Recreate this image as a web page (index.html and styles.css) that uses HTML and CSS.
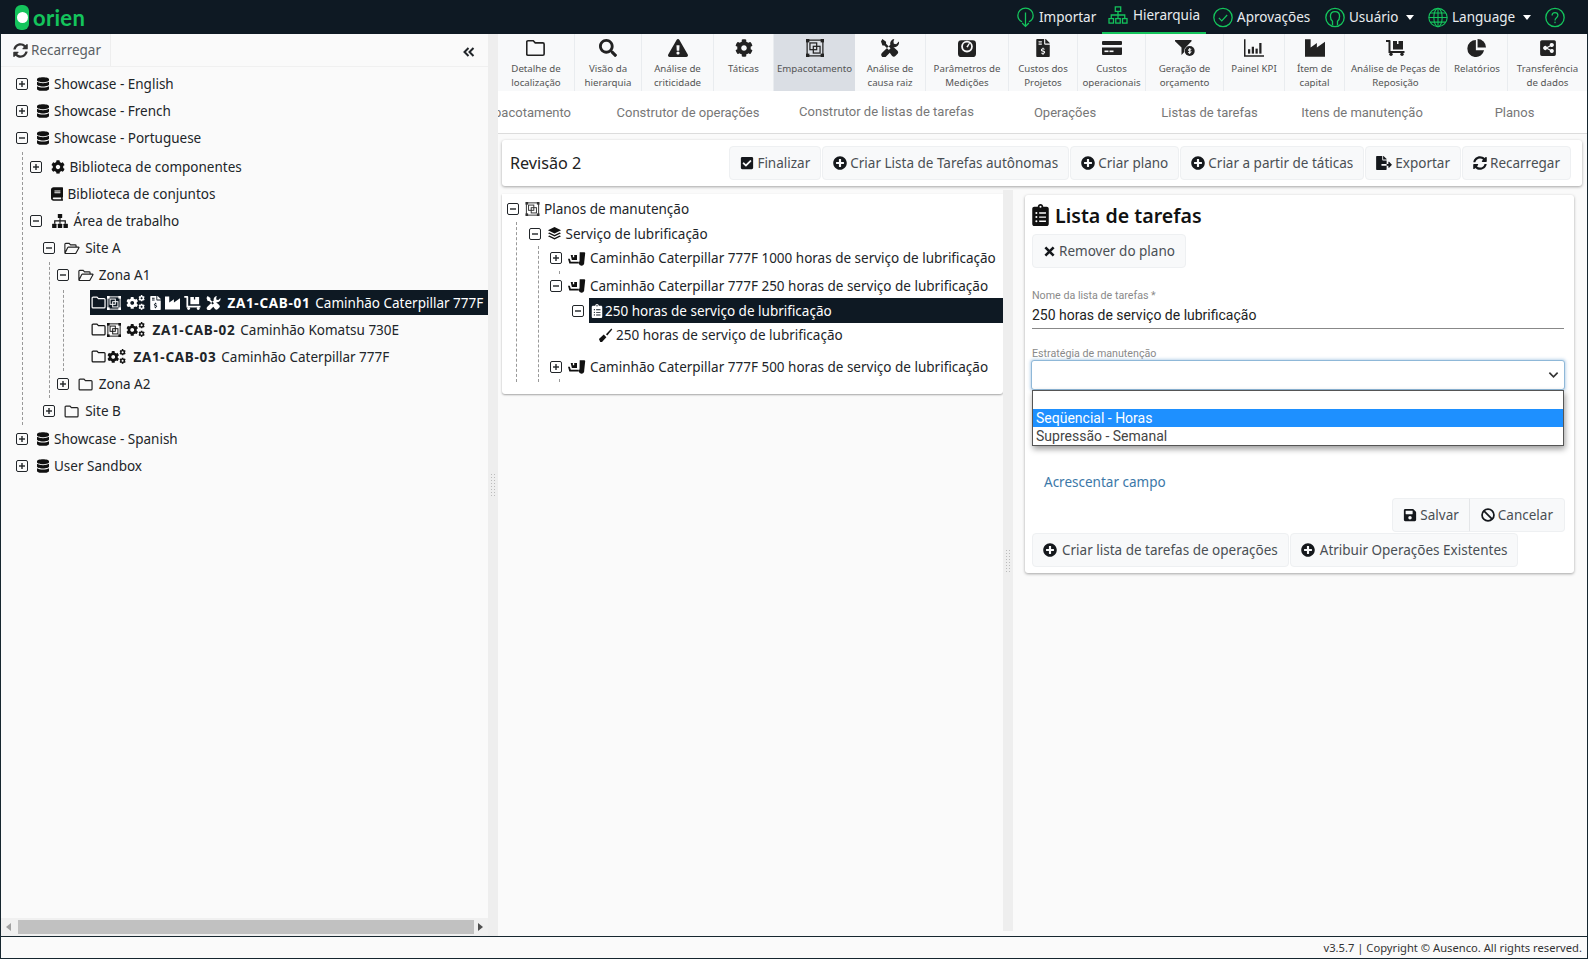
FILE: index.html
```html
<!DOCTYPE html>
<html lang="pt">
<head>
  <meta charset="UTF-8" />
  <meta name="viewport" content="width=device-width, initial-scale=1.0"/>
  <title>Orien</title>
  <link rel="stylesheet" href="styles.css">
</head>
<body>

<svg class="sprite" xmlns="http://www.w3.org/2000/svg">
  <symbol id="database" viewBox="0 0 448 512"><path d="M448 73.143v45.714C448 159.143 347.667 192 224 192S0 159.143 0 118.857V73.143C0 32.857 100.333 0 224 0s224 32.857 224 73.143zM448 176v102.857C448 319.143 347.667 352 224 352S0 319.143 0 278.857V176c48.125 33.143 136.208 48.572 224 48.572S399.874 209.143 448 176zm0 160v102.857C448 479.143 347.667 512 224 512S0 479.143 0 438.857V336c48.125 33.143 136.208 48.572 224 48.572S399.874 369.143 448 336z"/></symbol>
  <symbol id="cog" viewBox="0 0 512 512"><path d="M487.4 315.7l-42.6-24.6c4.3-23.2 4.3-47 0-70.2l42.6-24.6c4.9-2.8 7.1-8.6 5.5-14-11.1-35.6-30-67.8-54.7-94.6-3.8-4.1-10-5.1-14.8-2.3L380.8 110c-17.9-15.4-38.5-27.3-60.8-35.1V25.8c0-5.6-3.9-10.5-9.4-11.7-36.7-8.2-74.3-7.8-109.2 0-5.5 1.2-9.4 6.1-9.4 11.7V75c-22.2 7.9-42.8 19.8-60.8 35.1L88.7 85.5c-4.9-2.8-11-1.9-14.8 2.3-24.7 26.7-43.6 58.9-54.7 94.6-1.7 5.4.6 11.2 5.5 14L67.3 221c-4.3 23.2-4.3 47 0 70.2l-42.6 24.6c-4.9 2.8-7.1 8.6-5.5 14 11.1 35.6 30 67.8 54.7 94.6 3.8 4.1 10 5.1 14.8 2.3l42.6-24.6c17.9 15.4 38.5 27.3 60.8 35.1v49.2c0 5.6 3.9 10.5 9.4 11.7 36.7 8.2 74.3 7.8 109.2 0 5.5-1.2 9.4-6.1 9.4-11.7v-49.2c22.2-7.9 42.8-19.8 60.8-35.1l42.6 24.6c4.9 2.8 11 1.9 14.8-2.3 24.7-26.7 43.6-58.9 54.7-94.6 1.5-5.5-.7-11.3-5.6-14.1zM256 336c-44.1 0-80-35.9-80-80s35.9-80 80-80 80 35.9 80 80-35.9 80-80 80z"/></symbol>
  <symbol id="search" viewBox="0 0 512 512"><path d="M505 442.7L405.3 343c-4.5-4.5-10.6-7-17-7H372c27.6-35.3 44-79.7 44-128C416 93.1 322.9 0 208 0S0 93.1 0 208s93.1 208 208 208c48.3 0 92.7-16.4 128-44v16.3c0 6.4 2.5 12.5 7 17l99.7 99.7c9.4 9.4 24.6 9.4 33.9 0l28.3-28.3c9.4-9.4 9.4-24.6.1-34zM208 336c-70.7 0-128-57.2-128-128 0-70.7 57.2-128 128-128 70.7 0 128 57.2 128 128 0 70.7-57.2 128-128 128z"/></symbol>
  <symbol id="warn" viewBox="0 0 576 512"><path fill-rule="evenodd" d="M569.5 440C588 472 564.8 512 527.9 512H48.1C11.1 512-11.9 472 6.5 440L246.4 24c18.5-32 64.7-32 83.2 0zM288 354c-25.4 0-46 20.6-46 46s20.6 46 46 46 46-20.6 46-46-20.6-46-46-46zm-43.7-165.3l7.4 136c.3 6.4 5.6 11.3 12 11.3h48.5c6.4 0 11.6-5 12-11.3l7.4-136c.4-6.9-5.1-12.7-12-12.7h-63.4c-6.9 0-12.3 5.8-12 12.7z"/></symbol>
  <symbol id="plus" viewBox="0 0 512 512"><path d="M256 8C119 8 8 119 8 256s111 248 248 248 248-111 248-248S393 8 256 8zm144 276c0 6.6-5.4 12-12 12h-92v92c0 6.6-5.4 12-12 12h-56c-6.6 0-12-5.4-12-12v-92h-92c-6.6 0-12-5.4-12-12v-56c0-6.6 5.4-12 12-12h92v-92c0-6.6 5.4-12 12-12h56c6.6 0 12 5.4 12 12v92h92c6.6 0 12 5.4 12 12v56z"/></symbol>
  <symbol id="check" viewBox="0 0 448 512"><path d="M400 480H48c-26.51 0-48-21.49-48-48V80c0-26.51 21.49-48 48-48h352c26.51 0 48 21.49 48 48v352c0 26.51-21.49 48-48 48zm-204.686-98.059l184-184c6.248-6.248 6.248-16.379 0-22.627l-22.627-22.627c-6.248-6.248-16.379-6.249-22.628 0L184 302.745l-69.059-69.059c-6.248-6.248-16.379-6.248-22.628 0L69.686 256.313c-6.248 6.248-6.248 16.379 0 22.627l104 104c6.249 6.25 16.379 6.25 22.628.001z"/></symbol>
  <symbol id="sync" viewBox="0 0 512 512"><path d="M370.72 133.28C339.458 104.008 298.888 87.962 255.848 88c-77.458.068-144.328 53.178-162.791 126.85-1.344 5.363-6.122 9.15-11.651 9.15H24.103c-7.498 0-13.194-6.807-11.807-14.176C33.933 94.924 134.813 8 256 8c66.448 0 126.791 26.136 171.315 68.685L463.03 40.97C478.149 25.851 504 36.559 504 57.941V192c0 13.255-10.745 24-24 24H345.941c-21.382 0-32.09-25.851-16.971-40.971l41.75-41.749zM32 296h134.059c21.382 0 32.09 25.851 16.971 40.971l-41.75 41.75c31.262 29.273 71.835 45.319 114.876 45.28 77.418-.07 144.315-53.144 162.787-126.849 1.344-5.363 6.122-9.15 11.651-9.15h57.304c7.498 0 13.194 6.807 11.807 14.176C478.067 417.076 377.187 504 256 504c-66.448 0-126.791-26.136-171.315-68.685L48.97 471.03C33.851 486.149 8 475.441 8 454.059V320c0-13.255 10.745-24 24-24z"/></symbol>
  <symbol id="folder" viewBox="0 0 16 14"><path fill="none" stroke="currentColor" stroke-width="1.3" d="M1.6 1.2h4.2l1.6 1.7h6.1c.6 0 1 .4 1 1v7.9c0 .6-.4 1-1 1H1.6c-.6 0-1-.4-1-1V2.2c0-.6.4-1 1-1z"/></symbol>
  <symbol id="folder-open" viewBox="0 0 18 14"><path fill="none" stroke="currentColor" stroke-width="1.3" d="M1 12V2.2c0-.6.4-1 1-1h3.8l1.6 1.7h5.2c.6 0 1 .4 1 1v1.4M1.3 12.6h11.9l3.6-6.4c.2-.4 0-.8-.5-.8H5.1c-.4 0-.7.2-.9.5L1.2 12z"/></symbol>
  <symbol id="package" viewBox="0 0 16 16"><g fill="none" stroke="currentColor" stroke-width="1.1"><rect x="1" y="1" width="14" height="14"/><rect x="3.5" y="3.5" width="6" height="6"/><rect x="6.5" y="6.5" width="6" height="6"/></g><g><rect width="3" height="3"/><rect x="13" width="3" height="3"/><rect y="13" width="3" height="3"/><rect x="13" y="13" width="3" height="3"/></g></symbol>
  <symbol id="book" viewBox="0 0 448 512"><path d="M448 360V24c0-13.3-10.7-24-24-24H96C43 0 0 43 0 96v320c0 53 43 96 96 96h328c13.3 0 24-10.7 24-24v-16c0-7.5-3.5-14.3-8.9-18.7-4.2-15.4-4.2-59.3 0-74.7 5.4-4.3 8.9-11.1 8.9-18.6zM128 134c0-3.3 2.7-6 6-6h212c3.3 0 6 2.7 6 6v20c0 3.3-2.7 6-6 6H134c-3.3 0-6-2.7-6-6v-20zm0 64c0-3.3 2.7-6 6-6h212c3.3 0 6 2.7 6 6v20c0 3.3-2.7 6-6 6H134c-3.3 0-6-2.7-6-6v-20zm253.4 250H96c-17.7 0-32-14.3-32-32 0-17.6 14.4-32 32-32h285.4c-1.9 17.1-1.9 46.9 0 64z"/></symbol>
  <symbol id="sitemap" viewBox="0 0 18 16"><rect x="6.5" y="0" width="5" height="4.5" rx=".6"/><rect x="0" y="11" width="5" height="5" rx=".6"/><rect x="6.5" y="11" width="5" height="5" rx=".6"/><rect x="13" y="11" width="5" height="5" rx=".6"/><path d="M8.4 4.5h1.2v2.7h6.1V11h-1.4V8.5H9.6V11H8.4V8.5H3.7V11H2.3V7.2h6.1z"/></symbol>
  <symbol id="gears" viewBox="0 0 20 16"><use href="#cog" x="0" y="2" width="13" height="13"/><use href="#cog" x="13" y="0" width="7" height="7"/><use href="#cog" x="13" y="9" width="7" height="7"/></symbol>
  <symbol id="invoice" viewBox="0 0 384 512"><path d="M377 105L279.1 7c-4.5-4.5-10.6-7-17-7H256v128h128v-6.1c0-6.3-2.5-12.4-7-16.9zM224 136V0H24C10.7 0 0 10.7 0 24v464c0 13.3 10.7 24 24 24h336c13.3 0 24-10.7 24-24V160H248c-13.2 0-24-10.800-24-24zM64 72c0-4.400 3.600-8 8-8h80c4.400 0 8 3.600 8 8v16c0 4.400-3.600 8-8 8H72c-4.400 0-8-3.600-8-8V72zm0 64c0-4.400 3.600-8 8-8h80c4.400 0 8 3.600 8 8v16c0 4.400-3.600 8-8 8H72c-4.400 0-8-3.600-8-8v-16z"/><path class="cut" d="M208 270v-24h-32v24c-26 3-44 22-44 44 0 22 15 38 37 44l40 11c7 2 11 6 11 10 0 7-7 11-15 11h-28c-7 0-13-2-18-5l-22 21c11 10 25 15 39 16v24h32v-24c26-3 44-22 44-44 0-22-15-38-37-44l-40-11c-7-2-11-6-11-10 0-7 7-11 15-11h28c7 0 13 2 18 5l22-21c-11-10-25-15-39-16z"/></symbol>
  <symbol id="industry" viewBox="0 0 16 14"><path d="M0 0h4.500v6.500L9.500 3v3.500L16 2v12H0z"/></symbol>
  <symbol id="dolly" viewBox="0 0 20 16"><path d="M0 0h3.500a1 1 0 0 1 1 1v10h14v2H2.500V2H0z"/><path d="M7 1h4v3h1.500V1H17v8.500H7z"/><circle cx="5" cy="14.300" r="1.700"/><circle cx="16" cy="14.300" r="1.700"/></symbol>
  <symbol id="tools" viewBox="0 0 16 16"><path d="M1.200 0l3.300 2.400v1.800l4 4-1.500 1.500-4-4H1.300L0 2.200zM11.800.1a4 4 0 0 0-3.500 5L1 12.300a2.400 2.400 0 0 0 0 3.400 2.400 2.400 0 0 0 3.300 0l3.500-3.500 1.900 2.600a2.300 2.300 0 0 0 3.300.1l1.500-1.500a2.300 2.300 0 0 0 0-3.200L11 7.100a4 4 0 0 0 4.900-4.900l-2.400 2.400-2.100-.3-.3-2.100z"/></symbol>
  <symbol id="weight" viewBox="0 0 16 16"><path fill-rule="evenodd" d="M3 1h10a3 3 0 0 1 3 3v9a3 3 0 0 1-3 3H3a3 3 0 0 1-3-3V4a3 3 0 0 1 3-3zm5 0.500a5.200 5.200 0 1 0 0 10.400 5.200 5.200 0 0 0 0-10.400z"/><circle cx="8" cy="6.700" r="3.600"/><path fill="#f8f9fa" d="M9.900 3.300l.8.400-2 3.800-1.300-.7z"/></symbol>
  <symbol id="card" viewBox="0 0 20 16"><rect y="1" width="20" height="4" rx="1"/><path d="M0 7.500h20V14a1 1 0 0 1-1 1H1a1 1 0 0 1-1-1z"/><rect x="2.500" y="10.500" width="4" height="1.600" fill="#f8f9fa"/><rect x="7.500" y="10.500" width="4" height="1.600" fill="#f8f9fa"/></symbol>
  <symbol id="funnel" viewBox="0 0 20 16"><path d="M.5 0h15.500c.6 0 .9.700.5 1.200L11.500 6.500a5.500 5.500 0 0 0-2.200 5.500L6.500 15V7.500L0 1.200C-.300.700 0 0 .5 0z"/><circle cx="14.700" cy="11" r="5"/><path fill="none" stroke="#f8f9fa" stroke-width="1" d="M16.300 9.300h-2.200c-1 0-1 1.600 0 1.600h1.200c1 0 1 1.700 0 1.700h-2.200M14.700 8v6"/></symbol>
  <symbol id="bars" viewBox="0 0 16 14"><path d="M0 0h1.200v12.800H16V14H0z"/><rect x="3.200" y="8" width="1.800" height="3.500"/><rect x="6.200" y="6" width="1.800" height="5.500"/><rect x="9.200" y="7.500" width="1.800" height="4"/><rect x="12.200" y="3" width="1.800" height="8.500"/></symbol>
  <symbol id="pie" viewBox="0 0 16 16"><path d="M7 1a7.500 7.500 0 1 0 7.300 9H7z"/><path d="M8.500 0A7.500 7.500 0 0 1 16 7.500H8.500z"/></symbol>
  <symbol id="share" viewBox="0 0 14 16"><path fill-rule="evenodd" d="M1.500 1h11A1.500 1.500 0 0 1 14 2.500v11a1.500 1.500 0 0 1-1.500 1.500h-11A1.500 1.500 0 0 1 0 13.500v-11A1.500 1.500 0 0 1 1.500 1zm8.800 2.600a1.800 1.800 0 0 0-1.700 2.200L6 7.100a1.800 1.800 0 1 0 0 1.800l2.600 1.300a1.800 1.800 0 1 0 .5-.9L6.500 8v-.1l2.600-1.300a1.800 1.800 0 1 0 1.200-3z"/></symbol>
  <symbol id="loading" viewBox="0 0 20 16"><path d="M3 4h2.400v2.600h1.500V4H10v5.800H4.300z"/><path d="M0 8.200h2l1.100 3.300H12v2H1.500z"/><path d="M13 1h5c.8 0 1.200.5 1.100 1.200L18 12.500a3 3 0 1 1-5.200-1.500z"/></symbol>
  <symbol id="clipboard" viewBox="0 0 384 512"><path fill-rule="evenodd" d="M336 64h-80c0-35.300-28.700-64-64-64s-64 28.700-64 64H48C21.500 64 0 85.500 0 112v352c0 26.500 21.500 48 48 48h288c26.500 0 48-21.500 48-48V112c0-26.500-21.500-48-48-48zM96 424a24 24 0 1 1 0-48 24 24 0 0 1 0 48zm0-96a24 24 0 1 1 0-48 24 24 0 0 1 0 48zm0-96a24 24 0 1 1 0-48 24 24 0 0 1 0 48zm96-192a24 24 0 1 1 0 48 24 24 0 0 1 0-48zm128 368c0 4.400-3.600 8-8 8H168c-4.400 0-8-3.600-8-8v-16c0-4.400 3.600-8 8-8h144c4.400 0 8 3.600 8 8zm0-96c0 4.400-3.600 8-8 8H168c-4.400 0-8-3.600-8-8v-16c0-4.400 3.600-8 8-8h144c4.400 0 8 3.600 8 8zm0-96c0 4.400-3.600 8-8 8H168c-4.400 0-8-3.600-8-8v-16c0-4.400 3.600-8 8-8h144c4.400 0 8 3.600 8 8z"/></symbol>
  <symbol id="export" viewBox="0 0 576 512"><path d="M384 121.900c0-6.300-2.500-12.400-7-16.900L279.100 7c-4.500-4.500-10.600-7-17-7H256v128h128zM571 308l-95.700-96.400c-10.100-10.100-27.400-3-27.400 11.300V288h-64v64h64v65.200c0 14.300 17.300 21.400 27.400 11.300L571 332c6.600-6.600 6.600-17.400 0-24zm-379 28v-32c0-8.800 7.200-16 16-16h176V160H248c-13.200 0-24-10.800-24-24V0H24C10.700 0 0 10.700 0 24v464c0 13.300 10.700 24 24 24h336c13.300 0 24-10.700 24-24V352H208c-8.800 0-16-7.200-16-16z"/></symbol>
  <symbol id="save" viewBox="0 0 448 512"><path fill-rule="evenodd" d="M433.900 129.900l-83.900-83.900A48 48 0 0 0 316.100 32H48C21.500 32 0 53.500 0 80v352c0 26.500 21.500 48 48 48h352c26.500 0 48-21.500 48-48V163.900c0-12.700-5.100-24.900-14.100-34zM224 416a64 64 0 1 1 0-128 64 64 0 0 1 0 128zm96-304.500V212c0 6.600-5.400 12-12 12H76c-6.600 0-12-5.400-12-12V108c0-6.600 5.400-12 12-12h228.500c3.200 0 6.200 1.300 8.500 3.500l3.500 3.500c2.200 2.300 3.500 5.300 3.500 8.500z"/></symbol>
  <symbol id="ban" viewBox="0 0 16 16"><circle cx="8" cy="8" r="6.800" fill="none" stroke="currentColor" stroke-width="2"/><path d="M3.300 3.300l9.400 9.400" stroke="currentColor" stroke-width="2"/></symbol>
  <symbol id="times" viewBox="0 0 12 12"><path d="M1.500 1.500l9 9M10.500 1.500l-9 9" stroke="currentColor" stroke-width="2.800"/></symbol>
  <symbol id="chevrons" viewBox="0 0 12 10"><path d="M5.500 1L1.500 5l4 4M10.500 1l-4 4 4 4" fill="none" stroke="currentColor" stroke-width="2"/></symbol>
  <symbol id="wrench" viewBox="0 0 16 16"><path d="M.5 12.500L6 7.500l3 3-5 5.500H2z"/><path d="M8.500 7l6.200-6.300 1 1L10 8.500z"/></symbol>
  <symbol id="layers" viewBox="0 0 16 16"><path d="M8 0l7.500 3.700L8 7.400.5 3.700z"/><path d="M2.200 6.200L8 9l5.800-2.800 1.700.9L8 10.800.5 7.100z"/><path d="M2.200 9.700L8 12.500l5.800-2.800 1.700.9L8 14.300.5 10.600z"/></symbol>
  <symbol id="n-import" viewBox="0 0 20 24"><path fill="none" stroke="currentColor" stroke-width="1.500" d="M6 17C3 15.500 1 12.500 1 9.500 1 4.800 5 1 10 1s9 3.800 9 8.500c0 3-2 6-5 7.500M10 6v16M6 18.500l4 4 4-4"/></symbol>
  <symbol id="n-tree" viewBox="0 0 22 20"><g fill="none" stroke="currentColor" stroke-width="1.400"><rect x="8" y="1" width="6" height="5"/><rect x="1" y="14" width="5" height="5"/><rect x="8.500" y="14" width="5" height="5"/><rect x="16" y="14" width="5" height="5"/><path d="M11 6v8M3.500 14v-4h15v4"/></g></symbol>
  <symbol id="n-ok" viewBox="0 0 24 24"><circle cx="12" cy="12" r="11" fill="none" stroke="currentColor" stroke-width="1.600"/><path d="M7 12.500l3.500 3.500L17 9" fill="none" stroke="currentColor" stroke-width="1.500"/></symbol>
  <symbol id="n-user" viewBox="0 0 24 24"><circle cx="12" cy="12" r="11" fill="none" stroke="currentColor" stroke-width="1.600"/><path d="M9 21v-4.500C7 15 6.500 12.500 6.500 10.500 6.500 7 9 5 12 5s5.500 2 5.500 5.500c0 2-.5 4.500-2.500 6V21" fill="none" stroke="currentColor" stroke-width="1.600"/></symbol>
  <symbol id="n-globe" viewBox="0 0 24 24"><g fill="none" stroke="currentColor" stroke-width="1.300"><circle cx="12" cy="12" r="11"/><ellipse cx="12" cy="12" rx="5" ry="11"/><path d="M12 1v22M1 12h22M2.500 6.500h19M2.500 17.500h19"/></g></symbol>
  <symbol id="n-help" viewBox="0 0 24 24"><circle cx="12" cy="12" r="11" fill="none" stroke="currentColor" stroke-width="1.600"/><path d="M8.500 9.500c0-2.200 1.600-3.500 3.500-3.500s3.500 1.300 3.500 3.300c0 3-3.500 3-3.500 6.200" fill="none" stroke="currentColor" stroke-width="1.500"/><rect x="11.200" y="17" width="1.600" height="1.800"/></symbol>
</svg>

<div class="app">

  <header class="topbar">
    <div class="logo"><span class="logo-pill"></span><span class="logo-text">orien</span></div>
    <nav class="nav">
      <a class="nav-item n1"><svg class="n-ico"><use href="#n-import"/></svg>Importar</a>
      <a class="nav-item n2 active"><svg class="n-ico wide"><use href="#n-tree"/></svg>Hierarquia</a>
      <a class="nav-item n3"><svg class="n-ico"><use href="#n-ok"/></svg>Aprovações</a>
      <a class="nav-item n4"><svg class="n-ico"><use href="#n-user"/></svg>Usuário<span class="caret"></span></a>
      <a class="nav-item n5"><svg class="n-ico"><use href="#n-globe"/></svg>Language<span class="caret"></span></a>
      <a class="nav-item n6"><svg class="n-ico"><use href="#n-help"/></svg></a>
    </nav>
  </header>

  <div class="main">

    <aside class="side">
      <div class="side-head">
        <button class="reload"><svg class="i"><use href="#sync"/></svg>Recarregar</button>
        <svg class="collapse"><use href="#chevrons"/></svg>
      </div>
      <div class="side-tree">
        <ul class="tree">
          <li><div class="row"><span class="tg plus"></span><svg class="i db"><use href="#database"/></svg><span>Showcase - English</span></div></li>
          <li><div class="row"><span class="tg plus"></span><svg class="i db"><use href="#database"/></svg><span>Showcase - French</span></div></li>
          <li><div class="row"><span class="tg"></span><svg class="i db"><use href="#database"/></svg><span>Showcase - Portuguese</span></div>
            <ul class="lined top">
              <li><div class="row"><span class="tg plus"></span><svg class="i c14"><use href="#cog"/></svg><span>Biblioteca de componentes</span></div></li>
              <li><div class="row"><span class="tg none"></span><svg class="i c12"><use href="#book"/></svg><span>Biblioteca de conjuntos</span></div></li>
              <li><div class="row"><span class="tg"></span><svg class="i c17"><use href="#sitemap"/></svg><span>Área de trabalho</span></div>
                <ul class="plain">
                  <li><div class="row"><span class="tg"></span><svg class="i c16"><use href="#folder-open"/></svg><span>Site A</span></div>
                    <ul class="lined">
                      <li><div class="row"><span class="tg"></span><svg class="i c16"><use href="#folder-open"/></svg><span>Zona A1</span></div>
                        <ul class="lined">
                          <li><div class="row leaf selected">
                            <svg class="i f16"><use href="#folder"/></svg><svg class="i p14"><use href="#package"/></svg><svg class="i g18"><use href="#gears"/></svg><svg class="i s11"><use href="#invoice"/></svg><svg class="i s15"><use href="#industry"/></svg><svg class="i s18"><use href="#dolly"/></svg><svg class="i s15"><use href="#tools"/></svg>
                            <b>ZA1-CAB-01</b><span class="desc">Caminhão Caterpillar 777F</span></div></li>
                          <li><div class="row leaf">
                            <svg class="i f16"><use href="#folder"/></svg><svg class="i p14"><use href="#package"/></svg><svg class="i g18"><use href="#gears"/></svg>
                            <b>ZA1-CAB-02</b><span class="desc">Caminhão Komatsu 730E</span></div></li>
                          <li><div class="row leaf">
                            <svg class="i f16"><use href="#folder"/></svg><svg class="i g18"><use href="#gears"/></svg>
                            <b>ZA1-CAB-03</b><span class="desc">Caminhão Caterpillar 777F</span></div></li>
                        </ul>
                      </li>
                      <li><div class="row"><span class="tg plus"></span><svg class="i c16"><use href="#folder"/></svg><span>Zona A2</span></div></li>
                    </ul>
                  </li>
                  <li><div class="row"><span class="tg plus"></span><svg class="i c16"><use href="#folder"/></svg><span>Site B</span></div></li>
                </ul>
              </li>
            </ul>
          </li>
          <li><div class="row"><span class="tg plus"></span><svg class="i db"><use href="#database"/></svg><span>Showcase - Spanish</span></div></li>
          <li><div class="row"><span class="tg plus"></span><svg class="i db"><use href="#database"/></svg><span>User Sandbox</span></div></li>
        </ul>
      </div>
      <div class="hscroll"><span class="arrow left"></span><span class="thumb"></span><span class="arrow right"></span></div>
    </aside>

    <div class="split"><span class="grip"></span></div>

    <section class="work">
      <div class="toolbar">
        <a class="tool"><svg class="t-ico"><use href="#folder"/></svg><span>Detalhe de localização</span></a>
        <a class="tool"><svg class="t-ico"><use href="#search"/></svg><span>Visão da hierarquia</span></a>
        <a class="tool"><svg class="t-ico"><use href="#warn"/></svg><span>Análise de criticidade</span></a>
        <a class="tool"><svg class="t-ico"><use href="#cog"/></svg><span>Táticas</span></a>
        <a class="tool on"><svg class="t-ico"><use href="#package"/></svg><span>Empacotamento</span></a>
        <a class="tool"><svg class="t-ico"><use href="#tools"/></svg><span>Análise de causa raiz</span></a>
        <a class="tool"><svg class="t-ico"><use href="#weight"/></svg><span>Parâmetros de Medições</span></a>
        <a class="tool"><svg class="t-ico"><use href="#invoice"/></svg><span>Custos dos Projetos</span></a>
        <a class="tool"><svg class="t-ico"><use href="#card"/></svg><span>Custos operacionais</span></a>
        <a class="tool"><svg class="t-ico"><use href="#funnel"/></svg><span>Geração de orçamento</span></a>
        <a class="tool"><svg class="t-ico"><use href="#bars"/></svg><span>Painel KPI</span></a>
        <a class="tool"><svg class="t-ico"><use href="#industry"/></svg><span>Ítem de capital</span></a>
        <a class="tool"><svg class="t-ico"><use href="#dolly"/></svg><span>Análise de Peças de Reposição</span></a>
        <a class="tool"><svg class="t-ico"><use href="#pie"/></svg><span>Relatórios</span></a>
        <a class="tool"><svg class="t-ico"><use href="#share"/></svg><span>Transferência de dados</span></a>
      </div>

      <div class="tabs">
        <a class="tab first"><span>Empacotamento</span></a>
        <a class="tab">Construtor de operações</a>
        <a class="tab active">Construtor de listas de tarefas</a>
        <a class="tab">Operações</a>
        <a class="tab">Listas de tarefas</a>
        <a class="tab">Itens de manutenção</a>
        <a class="tab">Planos</a>
      </div>

      <div class="content">
        <div class="rev-card">
          <div class="rev-title">Revisão 2</div>
          <div class="btns">
            <button class="btn"><svg class="i"><use href="#check"/></svg>Finalizar</button>
            <button class="btn"><svg class="i"><use href="#plus"/></svg>Criar Lista de Tarefas autônomas</button>
            <button class="btn"><svg class="i"><use href="#plus"/></svg>Criar plano</button>
            <button class="btn"><svg class="i"><use href="#plus"/></svg>Criar a partir de táticas</button>
            <button class="btn"><svg class="i wide"><use href="#export"/></svg>Exportar</button>
            <button class="btn"><svg class="i"><use href="#sync"/></svg>Recarregar</button>
          </div>
        </div>

        <div class="panes">
          <div class="pane-left">
            <div class="plan-card">
              <div class="prow"><span class="tg"></span><svg class="i p16"><use href="#package"/></svg><span>Planos de manutenção</span></div>
              <ul class="ptree">
                <li>
                  <div class="prow"><span class="tg"></span><svg class="i p14b"><use href="#layers"/></svg><span>Serviço de lubrificação</span></div>
                  <ul class="ptree">
                    <li>
                      <div class="prow"><span class="tg plus"></span><svg class="i p18"><use href="#loading"/></svg><span>Caminhão Caterpillar 777F 1000 horas de serviço de lubrificação</span></div>
                      <div class="stub"></div>
                    </li>
                    <li>
                      <div class="prow"><span class="tg"></span><svg class="i p18"><use href="#loading"/></svg><span>Caminhão Caterpillar 777F 250 horas de serviço de lubrificação</span></div>
                      <ul class="ptree inner">
                        <li>
                          <div class="prow psel"><span class="tg"></span><span class="sel-bg"><svg class="i c12w"><use href="#clipboard"/></svg><span>250 horas de serviço de lubrificação</span></span></div>
                          <ul class="ptree last">
                            <li><div class="prow pleaf"><svg class="i w15"><use href="#wrench"/></svg><span>250 horas de serviço de lubrificação</span></div></li>
                          </ul>
                        </li>
                      </ul>
                    </li>
                    <li>
                      <div class="prow"><span class="tg plus"></span><svg class="i p18"><use href="#loading"/></svg><span>Caminhão Caterpillar 777F 500 horas de serviço de lubrificação</span></div>
                      <div class="stub"></div>
                    </li>
                  </ul>
                </li>
              </ul>
            </div>
          </div>

          <div class="split inner-split"><span class="grip"></span></div>

          <div class="pane-right">
            <div class="form-card">
              <h2 class="form-title"><svg class="title-ico"><use href="#clipboard"/></svg>Lista de tarefas</h2>
              <button class="btn remove"><svg class="i x"><use href="#times"/></svg>Remover do plano</button>

              <label class="fld-label first-label">Nome da lista de tarefas *</label>
              <div class="fld-value">250 horas de serviço de lubrificação</div>

              <label class="fld-label second-label">Estratégia de manutenção</label>
              <div class="select-wrap">
                <div class="select"><svg class="chev" viewBox="0 0 12 8"><path d="M1.500 1.500L6 6l4.500-4.500" fill="none" stroke="currentColor" stroke-width="1.800"/></svg></div>
                <div class="dropdown">
                  <div class="opt">&nbsp;</div>
                  <div class="opt on">Seqüencial - Horas</div>
                  <div class="opt">Supressão - Semanal</div>
                </div>
              </div>

              <a class="add-field">Acrescentar campo</a>

              <div class="save-row">
                <button class="btn joined-l"><svg class="i"><use href="#save"/></svg>Salvar</button>
                <button class="btn joined-r"><svg class="i"><use href="#ban"/></svg>Cancelar</button>
              </div>
              <div class="ops-row">
                <button class="btn"><svg class="i"><use href="#plus"/></svg>Criar lista de tarefas de operações</button>
                <button class="btn"><svg class="i"><use href="#plus"/></svg>Atribuir Operações Existentes</button>
              </div>
            </div>
          </div>
        </div>
      </div>
    </section>
  </div>

  <footer class="footer">v3.5.7 | Copyright © Ausenco. All rights reserved.</footer>
</div>

</body>
</html>
```

FILE: styles.css
```css
* { box-sizing: border-box; }
html, body { margin: 0; padding: 0; height: 100%; overflow: hidden; }
body { font-family: "Noto Sans", "Open Sans", sans-serif; font-size: 13.5px; color: #212529; background: #fafafa; }
ul { list-style: none; margin: 0; padding: 0; }
button { font: inherit; color: inherit; }
svg { display: block; flex: none; fill: currentColor; }
.sprite { position: absolute; width: 0; height: 0; }
.cut { fill: var(--cut, #f8f9fa); }

.app { width: 1588px; height: 959px; display: flex; flex-direction: column; border: 1px solid #16262f; border-top: 0; }

/* top bar */
.topbar { height: 34px; background: #0e1923; display: flex; justify-content: space-between; flex: none; margin: 0 -1px; }
.logo { display: flex; align-items: center; padding-left: 15px; color: #14c45c; }
.logo-pill { width: 14px; height: 25px; border-radius: 6px; background: #14c45c; position: relative; margin-top: 1px; }
.logo-pill::after { content: ""; position: absolute; left: 1.500px; top: 7px; width: 11px; height: 11px; border-radius: 50%; background: #fff; }
.logo-text { font: 700 22px "Lato", sans-serif; margin-left: 4px; letter-spacing: .3px; }
.nav { display: flex; align-items: center; height: 34px; color: #fff; font-size: 13.5px; padding-right: 20px; }
.nav-item { display: flex; align-items: center; height: 34px; color: #e9ecef; }
.n-ico { width: 20px; height: 21px; color: #14c45c; margin-right: 4px; }
.n-ico.wide { width: 22px; height: 18px; margin-right: 4px; }
.n1 { width: 85px; }
.n1 .n-ico { width: 17px; margin-right: 5px; }
.n2 { width: 104px; margin-right: 7px; padding-left: 5px; border-bottom: 2px solid #14c45c; padding-bottom: 3px; }
.n3 { width: 112px; }
.n4 { width: 103px; }
.n5 { width: 117px; }
.n6 { width: 23px; }
.caret { border: 4.500px solid transparent; border-top: 5px solid #fff; border-bottom: 0; margin-left: 8px; width: 0; height: 0; }

/* layout */
.main { flex: 1; display: flex; min-height: 0; border-bottom: 1px solid #16262f; height: 902px; }
.side { width: 487px; flex: none; background: #fafafa; display: flex; flex-direction: column; position: relative; }
.split { width: 10px; flex: none; background: #eee; display: flex; align-items: center; justify-content: center; }
.grip { width: 6px; height: 24px; background-image: radial-gradient(#bbb 1px, transparent 1px); background-size: 3px 3px; }
.work { flex: 1; min-width: 0; display: flex; flex-direction: column; background: #fafafa; }

/* side panel */
.side-head { height: 33px; display: flex; align-items: stretch; justify-content: space-between; border-bottom: 1px solid #f0f0f0; flex: none; padding-left: 1px; }
.reload { display: flex; align-items: center; width: 109px; padding: 0 0 0 11px; border: 0; border-right: 1px solid #eee; background: #f8f9fa; color: #5a5f64; }
.reload .i { width: 15px; height: 15px; margin-right: 3px; color: #333; }
.collapse { width: 12px; height: 10px; margin: 13px 13px 0 0; color: #212529; }
.side-tree { flex: 1; min-height: 0; overflow: hidden; padding: 3px 0 0 15px; }
.row { display: flex; align-items: center; height: 27.200px; white-space: nowrap; }
.tg { width: 12px; height: 12px; flex: none; border: 1px solid #212529; border-radius: 2px; margin-right: 9px; position: relative; background: #fafafa; }
.tg::before { content: ""; position: absolute; left: 2px; right: 2px; top: 4px; height: 2px; background: #212529; transform: scaleY(.7); }
.tg.plus::after { content: ""; position: absolute; top: 2px; bottom: 2px; left: 4px; width: 2px; background: #212529; transform: scaleX(.7); }
.tg.none { border: 0; background: none; }
.tg.none::before { display: none; }
.i { width: 14px; height: 14px; color: #111; }
.i.db { width: 12px; height: 14px; margin-right: 5px; }
.i.c14 { margin-right: 5px; }
.i.c12 { width: 12px; margin-right: 5px; }
.i.c17 { width: 18px; margin-right: 5px; }
.i.c16 { width: 16px; height: 13px; margin-right: 5px; color: #222; }
.lined, .plain { margin-left: 6px; padding-left: 6.600px; border-left: 1px dashed #999; }
.plain { border-left-color: transparent; }
.top { padding-top: 1.500px; }
.leaf { margin-left: 20px; padding-left: 1px; }
.leaf .i { margin-right: 0; }
.leaf .f16 { width: 16px; height: 13px; }
.leaf .p14 { margin-right: 5px; }
.leaf .g18 { width: 19px; height: 15px; margin-right: 5px; }
.leaf .s11 { width: 11px; margin-right: 4px; }
.leaf .s15 { width: 15px; margin-right: 4px; }
.leaf .s18 { width: 18px; margin-right: 4px; }
.leaf b { margin-left: 2px; font-weight: 700; letter-spacing: .7px; }
.leaf .desc { margin-left: 5px; }
.selected { --cut: #0e1923; background: #0e1923; color: #fff; height: 25px; margin-top: 1px; margin-bottom: 1.200px; overflow: hidden; }
.selected .i { color: #fff; }
.hscroll { height: 18px; flex: none; display: flex; align-items: center; background: #f0f0f0; padding: 0 5px; margin-top: auto; }
.thumb { flex: 1; height: 14px; background: #c1c1c1; margin: 0 4px 0 7px; }
.arrow { width: 0; height: 0; border: 4px solid transparent; }
.arrow.left { border-right: 5px solid #a0a0a0; border-left: 0; }
.arrow.right { border-left: 5px solid #505050; border-right: 0; }

/* module toolbar */
.toolbar { display: grid; grid-template-columns: 77px 67px 72px 60px 81px 71px 83px 69px 68px 78px 61px 60px 102px 61px 80px; height: 57px; flex: none; background: #f8f9fa; overflow: hidden; }
.tool { display: flex; flex-direction: column; align-items: center; padding-top: 5px; border-right: 1px solid #e9ecef; font-size: 9.700px; line-height: 13.500px; color: #555; text-align: center; white-space: normal; }
.tool.on { background: #dadee4; border-right: 0; }
.tool span { display: block; padding: 0 2px; }
.t-ico { width: 20px; height: 18px; color: #222; margin-bottom: 5px; flex: none; }

/* tabs */
.tabs { display: grid; grid-template-columns: 99px 182px 215px 142px 147px 158px 147px; height: 43px; flex: none; background: #fff; border-bottom: 1px solid #dcdcdc; font: 400 13px "Roboto", sans-serif; color: #777; overflow: hidden; }
.tab { display: flex; align-items: center; justify-content: center; white-space: nowrap; height: 43px; padding-bottom: 1px; }
.tab.first { justify-content: flex-end; padding-right: 26px; overflow: hidden; }
.tab.active { border-bottom: 1px solid #3f4a8a; }

/* content */
.content { flex: 1; min-height: 0; display: flex; flex-direction: column; padding: 6px 0 5px 4px; }
.rev-card { height: 46px; margin-right: 5px; flex: none; background: #fff; border-radius: 3px; box-shadow: 0 1px 3px rgba(0,0,0,.35); display: flex; align-items: center; justify-content: space-between; padding: 0 11px 0 8px; }
.rev-title { font-size: 16.200px; color: #222; }
.btns { display: flex; gap: 1px; }
.btn { display: inline-flex; align-items: center; height: 34px; padding: 0 10px; background: #f8f9fa; border: 1px solid #eef0f2; border-radius: 4px; color: #4a4f54; white-space: nowrap; }
.btn .i { margin-right: 3px; color: #15181c; }
.btn .i.wide { width: 16px; }
.panes { flex: 1; display: flex; min-height: 0; margin-top: 4px; }
.pane-left { width: 501px; flex: none; padding-top: 4px; }
.inner-split { align-self: stretch; }
.pane-right { flex: 1; padding: 5px 13px 0 12px; }

/* plan tree */
.plan-card { background: #fff; height: 200px; border-radius: 0 0 3px 3px; box-shadow: 0 1px 2px rgba(0,0,0,.35); padding: 3px 0 0 5px; overflow: hidden; }
.prow { display: flex; align-items: center; height: 24.500px; white-space: nowrap; }
.prow .tg { margin-right: 6px; background: #fff; }
.ptree { margin-left: 9px; padding-left: 11.500px; border-left: 1px dashed #999; }
.ptree .ptree .ptree { border-left-color: transparent; padding-left: 12px; }
.i.p16 { width: 15px; height: 14px; margin-right: 4px; color: #333; }
.i.p14b { width: 15px; margin-right: 4px; }
.i.p18 { width: 18px; height: 15px; margin-right: 4px; }
.stub { height: 3px; margin-left: 9px; border-left: 1px dashed #999; }
.ptree .inner { padding-left: 12px; margin-bottom: 2px; border-left: 1px dashed #999; }
.ptree .last { border-left: 1px dashed #999; padding-bottom: 5px; }
.psel { height: 25px; }
.sel-bg { flex: 1; height: 25px; display: flex; align-items: center; background: #0e1923; color: #fff; margin-left: -1px; padding-left: 2px; }
.sel-bg .i { width: 12px; color: #fff; margin-right: 2px; }
.pleaf { padding-left: 4px; }
.pleaf .i { width: 15px; margin-right: 3px; }

/* form card */
.form-card { background: #fff; height: 378px; border-radius: 3px; box-shadow: 0 1px 3px rgba(0,0,0,.35); padding: 4px 10px 0 7px; position: relative; }
.form-title { margin: 0; height: 32px; display: flex; align-items: center; font-size: 19.600px; font-weight: 600; color: #111; }
.title-ico { width: 17px; height: 22px; margin-right: 6px; color: #111; }
.remove { margin-top: 3px; display: flex; width: 154px; padding: 0 11px; }
.remove .x { width: 11px; height: 11px; margin-right: 4px; }
.fld-label { display: block; font: 400 10.700px "Roboto", sans-serif; color: #8a8a8a; }
.first-label { margin-top: 22px; line-height: 12px; }
.fld-value { font: 400 14px "Roboto", sans-serif; color: #222; height: 25px; line-height: 22px; margin-top: 2px; border-bottom: 1px solid #888; }
.second-label { margin-top: 19px; line-height: 12px; }
.select-wrap { position: relative; height: 30px; margin: 0 -1px; }
.select { height: 30px; border: 1px solid #8fb8d8; border-radius: 3px; box-shadow: 0 0 3px 1px rgba(110,165,210,.45); display: flex; align-items: center; justify-content: flex-end; padding-right: 5px; background: #fff; color: #333; }
.chev { width: 11px; height: 8px; }
.dropdown { position: absolute; left: 1px; right: 1px; top: 30px; border: 1px solid #555; background: #fff; box-shadow: 1px 3px 6px rgba(0,0,0,.4); font: 400 14px/18px "Roboto", sans-serif; color: #444; }
.opt { height: 18px; padding-left: 3px; white-space: nowrap; }
.opt.on { background: #1e90ff; color: #fff; }
.add-field { display: block; margin: 82px 0 0 12px; line-height: 20px; color: #3c78a8; }
.save-row { display: flex; justify-content: flex-end; margin: 6px -1px 0 0; }
.joined-l { border-radius: 4px 0 0 4px; border-right: 1px solid #e4e6e8; padding: 0 10px; }
.joined-r { border-radius: 0 4px 4px 0; border-left: 0; padding: 0 11px; }
.ops-row { display: flex; gap: 1px; margin-top: 1px; }
.ops-row .i { margin-right: 5px; }

.footer { height: 21px; flex: none; background: #fafafa; text-align: right; padding-right: 5px; font-size: 11.200px; line-height: 21px; color: #333; }
```
